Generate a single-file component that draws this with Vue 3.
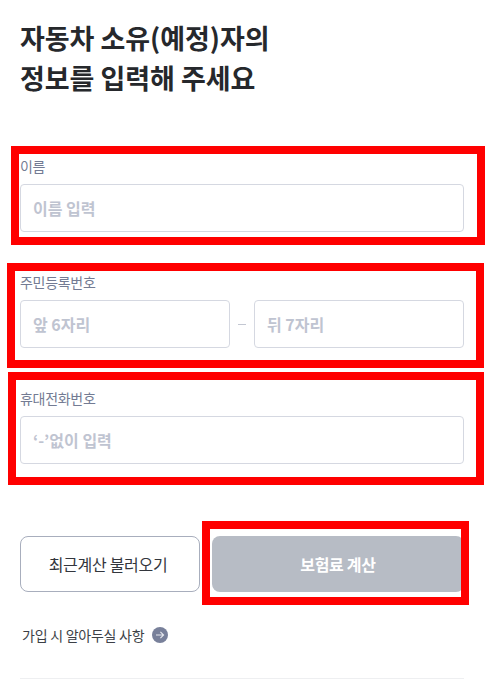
<script setup>
const note = "가입 시 알아두실 사항";
</script>

<template>
    <div class="page">
        <h1 class="title">자동차 소유(예정)자의<br />정보를 입력해 주세요</h1>

        <form class="form" @submit.prevent>
            <div class="field">
                <label class="label">이름</label>
                <input class="input" type="text" placeholder="이름 입력" />
            </div>

            <div class="field">
                <label class="label">주민등록번호</label>
                <div class="split">
                    <input class="input" type="text" placeholder="앞 6자리" />
                    <span class="dash"></span>
                    <input class="input" type="text" placeholder="뒤 7자리" />
                </div>
            </div>

            <div class="field">
                <label class="label">휴대전화번호</label>
                <input class="input" type="text" placeholder="‘-’없이 입력" />
            </div>

            <div class="buttons">
                <button class="btn btn-recent" type="button">최근계산 불러오기</button>
                <button class="btn btn-calc" type="submit">보험료 계산</button>
            </div>
        </form>

        <a class="note">
            {{ note }}
            <svg class="note-icon" width="16" height="16" viewBox="0 0 16 16">
                <circle cx="8" cy="8" r="8" fill="#78809a" />
                <path d="M4 8h7.5M8.4 4.8l3.2 3.2-3.2 3.2" fill="none" stroke="#e6e8ee" stroke-width="1.1" />
            </svg>
        </a>

        <div class="divider"></div>

        <!-- red marks over the form -->
        <div class="mark mark-1"></div>
        <div class="mark mark-2"></div>
        <div class="mark mark-3"></div>
        <div class="mark mark-4"></div>
    </div>
</template>

<style scoped>
    .page {
        position: relative;
        width: 487px;
        height: 686px;
        overflow: hidden;
        padding: 18px 23px 0 20px;
        box-sizing: border-box;
        background: #fff;
        font-family: "Noto Sans CJK KR", "Noto Sans", sans-serif;
    }

    .title {
        margin: 0;
        font-size: 27px;
        line-height: 40px;
        font-weight: 700;
        letter-spacing: -0.05px;
        color: #26282c;
    }

    .form {
        margin-top: 58px;
    }

    .field {
        margin-bottom: 40px;
    }

    .label {
        display: block;
        height: 20px;
        margin-bottom: 8px;
        font-size: 14px;
        line-height: 20px;
        letter-spacing: -0.3px;
        color: #737b93;
    }

    .input {
        display: block;
        width: 100%;
        height: 48px;
        padding: 0 12px;
        box-sizing: border-box;
        border: 1px solid #d5d8e1;
        border-radius: 4px;
        outline: none;
        background: #fff;
        font-family: inherit;
        font-size: 16px;
        font-weight: 700;
    }

    .input::placeholder {
        color: #bfc4d1;
        opacity: 1;
    }

    .split {
        display: flex;
        align-items: center;
    }

    .split .input {
        flex: 1;
        width: 0;
    }

    .dash {
        width: 8px;
        height: 1px;
        margin: 0 8px;
        background: #c3c7d2;
    }

    .buttons {
        display: flex;
        gap: 12px;
        margin-top: 72px;
    }

    .btn {
        height: 56px;
        box-sizing: border-box;
        border-radius: 8px;
        font-family: inherit;
        font-size: 16px;
        letter-spacing: -0.3px;
    }

    .btn-recent {
        width: 180px;
        padding: 0 4px 0 0;
        border: 1px solid #a8aebd;
        background: #fff;
        color: #33363d;
    }

    .btn-calc {
        flex: 1;
        border: 0;
        background: #b7bcc5;
        color: #fff;
        font-weight: 700;
    }

    .note {
        display: flex;
        align-items: center;
        gap: 8px;
        margin: 33px 0 0 2px;
        height: 20px;
        font-size: 14px;
        letter-spacing: -0.25px;
        color: #3c3f46;
    }

    .divider {
        height: 1px;
        margin-top: 33px;
        background: #eeeff1;
    }

    .mark {
        position: absolute;
        box-sizing: border-box;
        border: 8px solid #f00;
    }

    .mark-1 {
        left: 11px;
        top: 146px;
        width: 474px;
        height: 99px;
    }

    .mark-2 {
        left: 7px;
        top: 263px;
        width: 477px;
        height: 105px;
    }

    .mark-3 {
        left: 8px;
        top: 372px;
        width: 476px;
        height: 113px;
    }

    .mark-4 {
        left: 202px;
        top: 521px;
        width: 267px;
        height: 84px;
    }
</style>
